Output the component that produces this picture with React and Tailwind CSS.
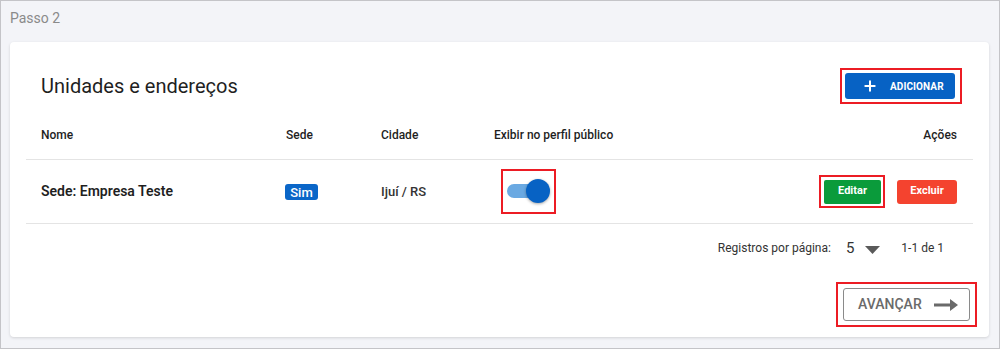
import { Plus } from 'lucide-react';

const font = { fontFamily: 'Roboto, "Liberation Sans", sans-serif' };

const RedBox = ({ className = '', children }) => (
    <div className={`flex items-center border-2 border-[#ec1c24] ${className}`}>{children}</div>
);

const Toggle = () => (
    <div className="relative w-[34px] h-[14px] rounded-full bg-[#6aa9e2]">
        <div className="absolute -top-[5px] left-[19px] w-[24px] h-[24px] rounded-full bg-[#0762c4] shadow-[0_1px_3px_rgba(0,0,0,0.35)]" />
    </div>
);

const App = () => {
    return (
        <div className="w-[1000px] h-[349px] border border-[#c4c4c8] bg-[#f3f4f8] pl-[9px] pr-[10px]" style={font}>
            <div className="h-[41px] pb-[7px] flex items-center text-[14px] text-[#8a8a8a]">Passo 2</div>

            <div className="w-[979px] h-[295px] bg-white rounded-[4px] shadow-[0_1px_3px_rgba(0,0,0,0.14)]">
                <div className="pt-[26px] pl-[31px] pr-[27px] h-[62px] flex items-end justify-between">
                    <div className="h-[36px] flex items-center text-[20px] text-[#1f1f1f]">Unidades e endereços</div>
                    <RedBox className="w-[122px] h-[36px] pl-[3px]">
                        <button className="w-[110px] h-[26px] rounded-[3px] bg-[#0762c4] flex items-center text-white">
                            <Plus className="w-[16px] h-[16px] ml-[17px]" strokeWidth={3} />
                            <span className="ml-[12px] text-[10px] font-bold tracking-[0.1px]">ADICIONAR</span>
                        </button>
                    </RedBox>
                </div>

                <div className="mx-[16px] mt-[7px]">
                    <div className="grid grid-cols-[245px_95px_113px_1fr_auto] h-[49px] items-center border-b border-[#e4e4e4] text-[12px] font-medium text-[#1f1f1f]">
                        <div className="pl-[15px]">Nome</div>
                        <div className="pl-[15px]">Sede</div>
                        <div className="pl-[15px]">Cidade</div>
                        <div className="pl-[15px]">Exibir no perfil público</div>
                        <div className="pr-[16px] text-right">Ações</div>
                    </div>

                    <div className="grid grid-cols-[245px_95px_113px_1fr_auto] h-[64px] items-center border-b border-[#e4e4e4]">
                        <div className="pl-[15px] text-[14px] font-semibold text-[#1f1f1f]">Sede: Empresa Teste</div>
                        <div className="pl-[14px]">
                            <span className="inline-flex items-center justify-center w-[33px] h-[16px] rounded-[3px] bg-[#0a66c8] text-white text-[13px] font-medium">Sim</span>
                        </div>
                        <div className="pl-[15px] text-[13px] font-medium text-[#333]">Ijuí / RS</div>
                        <div className="pl-[22px]">
                            <RedBox className="w-[55px] h-[45px] pl-[4px] mt-[-1px]">
                                <Toggle />
                            </RedBox>
                        </div>
                        <div className="pr-[16px] flex items-center justify-end gap-[12px]">
                            <RedBox className="w-[66px] h-[33px] pl-[3px]">
                                <button className="w-[57px] h-[24px] rounded-[2px] bg-[#0a9b3b] text-white text-[11px] font-bold">Editar</button>
                            </RedBox>
                            <button className="w-[60px] h-[24px] rounded-[3px] bg-[#f4432f] text-white text-[11px] font-bold">Excluir</button>
                        </div>
                    </div>

                    <div className="h-[48px] flex items-center justify-end pr-[29px] text-[12px] text-[#333]">
                        <span>Registros por página:</span>
                        <span className="ml-[15px] text-[15px]">5</span>
                        <svg width="15" height="8" viewBox="0 0 15 8" className="ml-[11px] mt-[3px]">
                            <path d="M0 0h15L7.5 8z" fill="#5a5a5a" />
                        </svg>
                        <span className="ml-[21px]">1-1 de 1</span>
                    </div>
                </div>

                <div className="mt-[10px] pr-[12px] flex justify-end">
                    <RedBox className="w-[141px] h-[45px] pl-[5px]">
                        <button className="w-[127px] h-[33px] rounded-[3px] border border-[#8a8a8a] flex items-center text-[14px] font-medium text-[#6a6a6a]">
                            <span className="ml-[14px]">AVANÇAR</span>
                            <svg width="24" height="12" viewBox="0 0 24 12" className="ml-[12px]">
                                <path d="M0 4.6h16V0l8 6-8 6V7.4H0z" fill="#6a6a6a" />
                            </svg>
                        </button>
                    </RedBox>
                </div>
            </div>
        </div>
    );
};

export default App;
